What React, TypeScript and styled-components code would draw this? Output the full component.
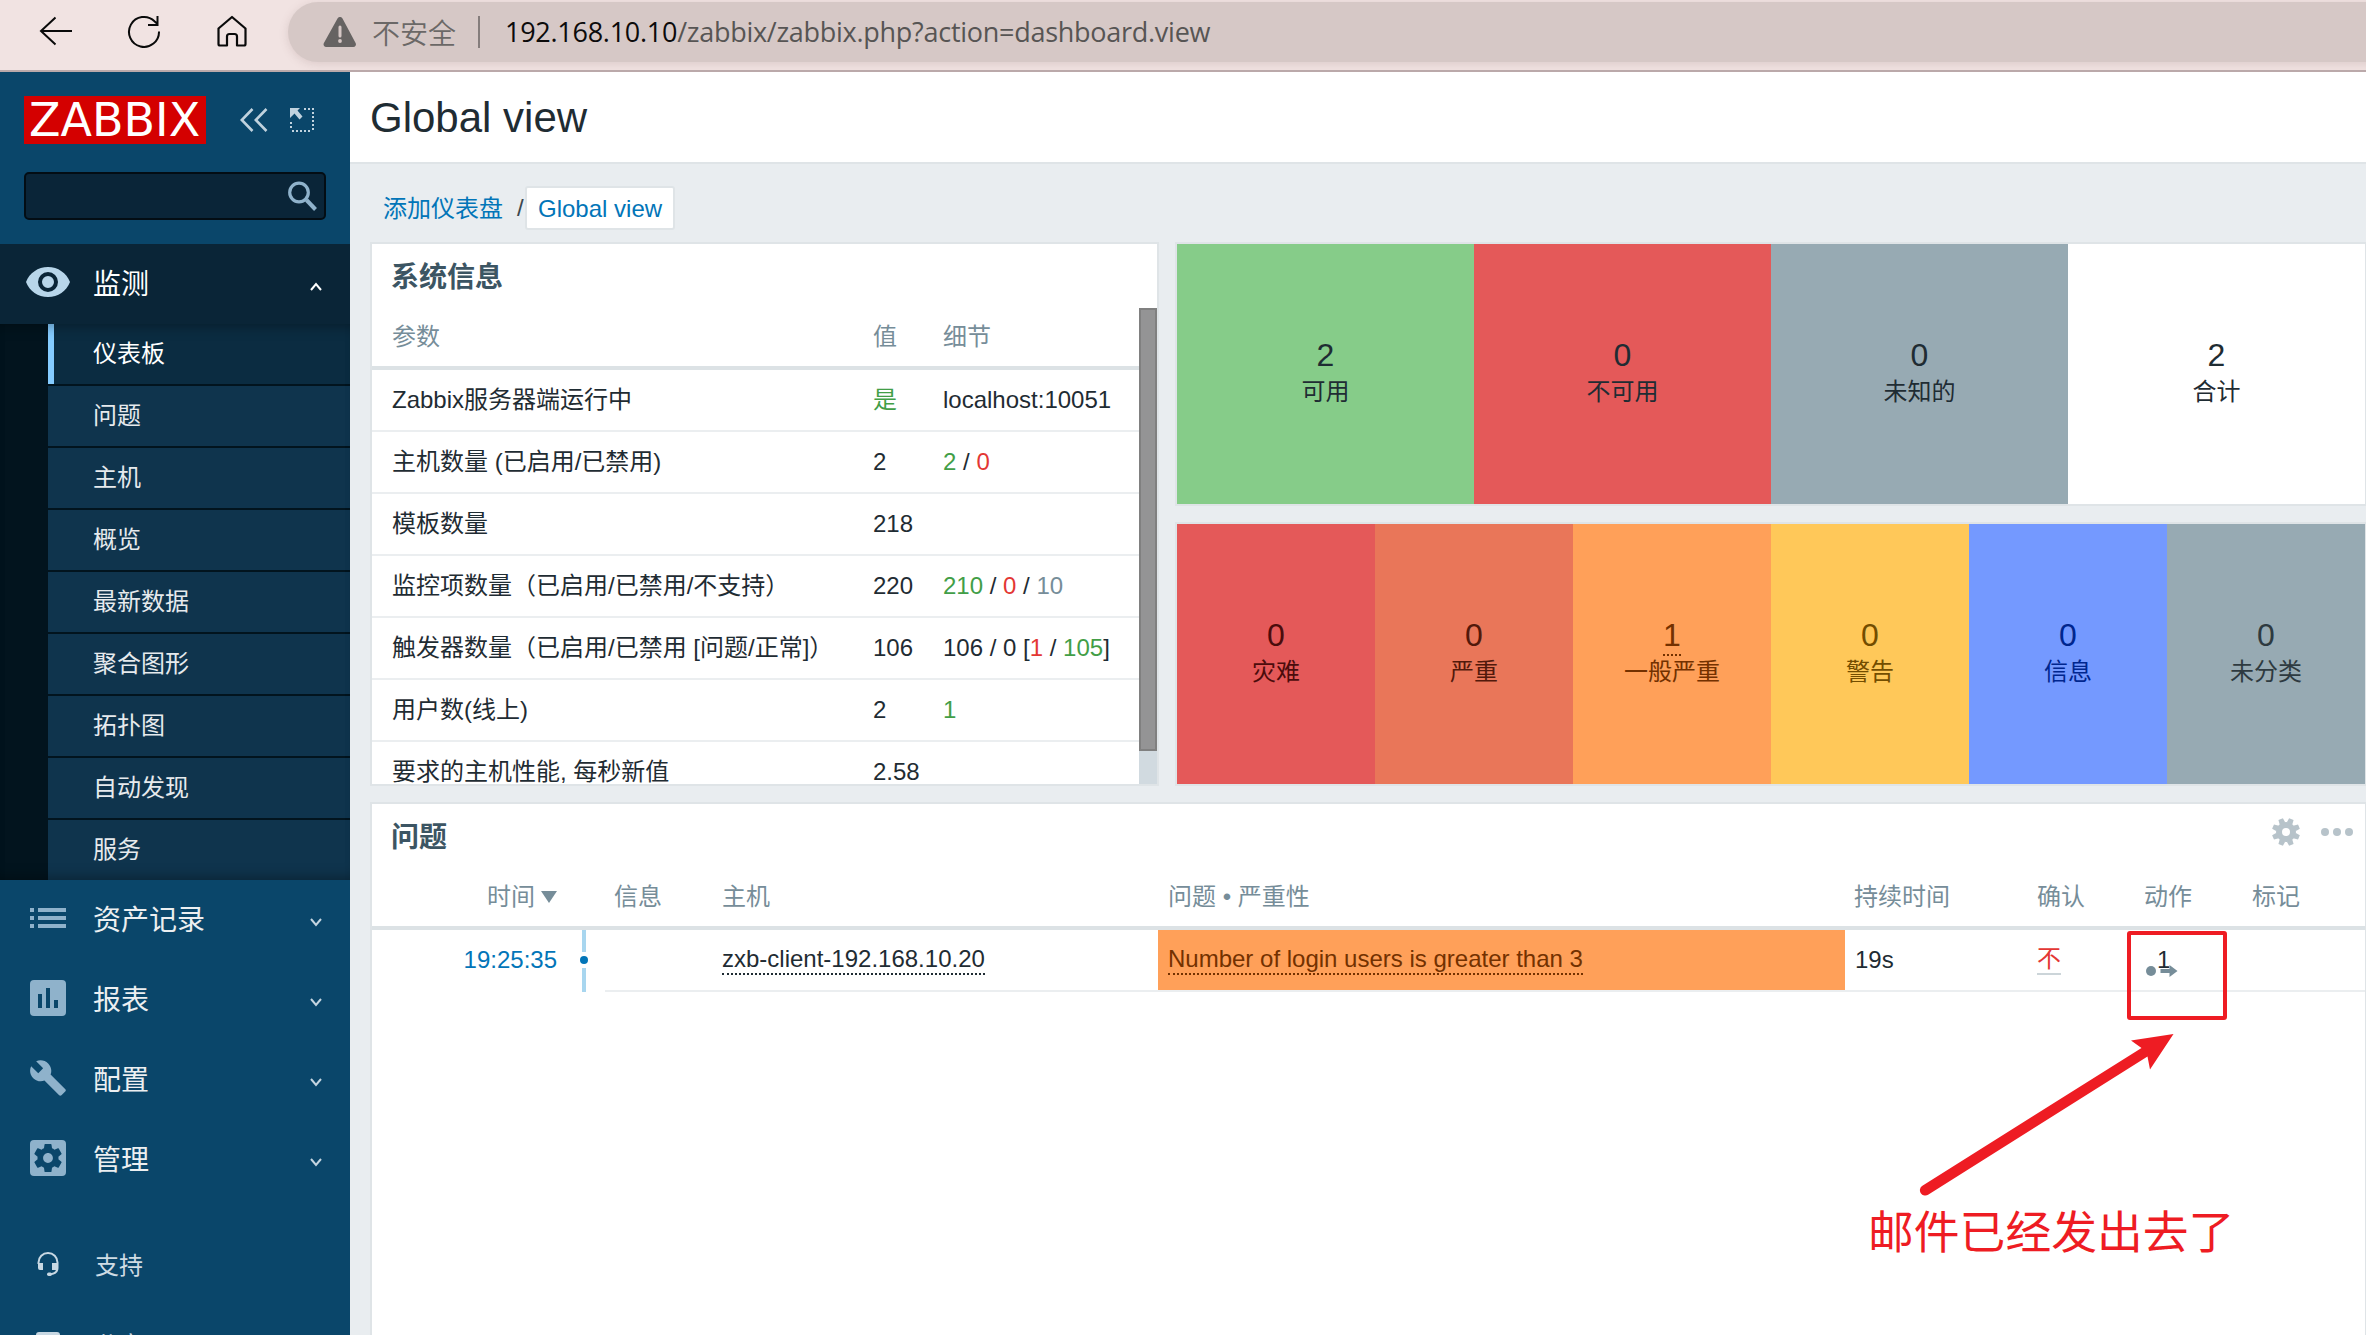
import React from "react";
import styled, { createGlobalStyle } from "styled-components";

const Global = createGlobalStyle`
  * { box-sizing: border-box; }
  html, body { margin: 0; padding: 0; overflow: hidden; }
  body {
    font-family: "Liberation Sans", "Noto Sans CJK SC", sans-serif;
    font-size: 24px;
    line-height: 28px;
    color: #1f2c33;
  }
  svg { display: block; flex: none; }
`;

const Page = styled.div`
  position: relative;
  width: 2366px;
  height: 1335px;
  overflow: hidden;
  display: flex;
  flex-direction: column;
  background: #e9edf0;
`;

/* ---------- browser bar ---------- */
const BrowserBar = styled.div`
  flex: none;
  height: 72px;
  display: flex;
  align-items: flex-start;
  background: #f1e3e2;
  border-bottom: 2px solid #bba9aa;
  overflow: hidden;
`;
const NavButtons = styled.div`
  width: 288px;
  height: 62px;
  padding-left: 38px;
  display: flex;
  align-items: center;
  gap: 52px;
`;
const Address = styled.div`
  flex: 1;
  height: 60px;
  margin: 2px -40px 0 0;
  padding-left: 35px;
  border-radius: 30px;
  background: #d6c8c6;
  box-shadow: 0 2px 10px rgba(120, 90, 90, 0.18);
  display: flex;
  align-items: center;
  color: #575554;
`;
const Insecure = styled.span`
  margin-left: 15px;
  font: 28px/40px "Noto Sans CJK SC", sans-serif;
  font-weight: 350;
  color: #6b6867;
`;
const Divider = styled.span`
  width: 2px;
  height: 32px;
  margin: 0 25px 0 22px;
  background: #857d7c;
`;
const Url = styled.span`
  font: 27px/40px "Open Sans", "Noto Sans", sans-serif;
  letter-spacing: -0.27px;
  white-space: nowrap;
  b { font-weight: 400; color: #0c0b0b; }
`;

/* ---------- sidebar ---------- */
const Body = styled.div`
  flex: 1;
  min-height: 0;
  display: flex;
`;
const Sidebar = styled.aside`
  flex: none;
  width: 350px;
  overflow: hidden;
  background: #0a466a;
  color: #e9edf0;
`;
const Brand = styled.div`
  height: 72px;
  margin-bottom: 28px;
  padding: 24px 0 0 24px;
  display: flex;
  align-items: center;
`;
const Logo = styled.div`
  width: 182px;
  height: 48px;
  padding-left: 5px;
  background: #d40000;
  color: #fff;
  font: 46px/48px "DejaVu Sans", sans-serif;
  white-space: nowrap;
`;
const BrandIcons = styled.div`
  margin-left: 34px;
  display: flex;
  align-items: center;
  gap: 22px;
`;
const Search = styled.div`
  width: 302px;
  height: 48px;
  margin: 0 0 24px 24px;
  padding-right: 7px;
  display: flex;
  align-items: center;
  justify-content: flex-end;
  border: 2px solid #030d14;
  border-radius: 5px;
  background: #0a2538;
`;
const MenuItem = styled.div<{ $open?: boolean }>`
  height: 80px;
  padding: 0 28px 0 24px;
  display: flex;
  align-items: center;
  font-size: 28px;
  line-height: 34px;
  background: ${(p) => (p.$open ? "#0a2537" : "transparent")};
  color: ${(p) => (p.$open ? "#fff" : "#eceff1")};
`;
const MenuIcon = styled.span`
  width: 48px;
  margin-right: 21px;
  padding-bottom: 4px;
  display: flex;
  justify-content: center;
`;
const MenuLabel = styled.span`
  flex: 1;
  padding-top: 1px;
`;
const Submenu = styled.div`
  position: relative;
  height: 556px;
  padding-left: 48px;
  background: #02141e;
  &::after {
    content: "";
    position: absolute;
    inset: 0;
    box-shadow: inset 0 12px 14px -10px rgba(0, 0, 0, 0.35), inset 0 -12px 14px -10px rgba(0, 0, 0, 0.35);
  }
`;
const SubItem = styled.div<{ $active?: boolean }>`
  height: 60px;
  margin-bottom: 2px;
  padding-left: ${(p) => (p.$active ? 39 : 45)}px;
  border-left: ${(p) => (p.$active ? "6px solid #85ccff" : "0")};
  line-height: 60px;
  background: ${(p) => (p.$active ? "#0b2c41" : "#0f344d")};
  color: ${(p) => (p.$active ? "#fff" : "#e6eaed")};
`;
const UserNav = styled.div`
  padding-top: 25px;
`;
const UserItem = styled(MenuItem)`
  font-size: 24px;
  color: #cfdce4;
  ${MenuIcon} { margin-right: 23px; padding-bottom: 2px; }
`;

/* ---------- main ---------- */
const Main = styled.main`
  flex: 1;
  min-width: 0;
  display: flex;
  flex-direction: column;
`;
const Header = styled.header`
  flex: none;
  height: 92px;
  padding: 22px 0 0 20px;
  background: #fff;
  border-bottom: 2px solid #dfe4e7;
  font-size: 42px;
  line-height: 48px;
`;
const Crumbs = styled.nav`
  flex: none;
  height: 78px;
  padding: 22px 0 0 33px;
  display: flex;
  line-height: 44px;
  color: #0275b8;
`;
const CrumbLink = styled.span`
  line-height: 46px;
`;
const Slash = styled.span`
  width: 22px;
  padding-left: 14px;
  color: #3a474e;
`;
const Crumb = styled.span`
  height: 44px;
  padding: 0 11px;
  line-height: 42px;
  border: 2px solid #dfe4e7;
  border-radius: 3px;
  background: #fff;
`;
const Dashboard = styled.div`
  flex: 1;
  width: 1997px;
  margin-left: 20px;
  display: grid;
  grid-template-columns: 789px 1192px;
  grid-template-rows: 264px 264px 560px;
  gap: 16px;
`;
const Widget = styled.section<{ $area: string }>`
  grid-area: ${(p) => p.$area};
  border: 2px solid #dfe4e7;
  background: #fff;
  overflow: hidden;
`;
const WidgetHead = styled.div`
  height: 64px;
  padding: 4px 12px 0 19px;
  display: flex;
  align-items: center;
  font-size: 28px;
  font-weight: 700;
  color: #3c5563;
`;
const WidgetActions = styled.div`
  height: 56px;
  margin: 0 0 12px auto;
  display: flex;
  align-items: center;
  gap: 21px;
`;

/* ---------- system information ---------- */
const Scroller = styled.div`
  height: 476px;
  display: flex;
`;
const InfoTable = styled.div`
  flex: 1;
`;
const InfoRow = styled.div<{ $head?: boolean }>`
  height: 62px;
  padding-left: 20px;
  display: grid;
  grid-template-columns: 481px 70px 1fr;
  line-height: ${(p) => (p.$head ? 58 : 60)}px;
  border-bottom: ${(p) => (p.$head ? "4px solid #dce2e5" : "2px solid #ebeef0")};
  color: ${(p) => (p.$head ? "#768d99" : "inherit")};
  white-space: nowrap;
`;
const Tint = styled.span<{ $c: string }>`
  color: ${(p) => p.$c};
`;
const Track = styled.div`
  width: 18px;
  background: #d1dae0;
`;
const Thumb = styled.div`
  height: 443px;
  background: #949495;
  border: 2px solid #808080;
`;

/* ---------- tiles ---------- */
const Tiles = styled.div`
  width: 1188px;
  height: 260px;
  display: flex;
`;
const Tile = styled.div<{ $bg: string; $fg: string }>`
  flex: 1;
  display: flex;
  flex-direction: column;
  align-items: center;
  justify-content: center;
  padding-bottom: 6px;
  background: ${(p) => p.$bg};
  color: ${(p) => p.$fg};
`;
const Count = styled.span<{ $dotted?: boolean }>`
  font-size: 32px;
  line-height: 38px;
  margin-bottom: 2px;
  height: 40px;
  border-bottom: ${(p) => (p.$dotted ? "2px dotted currentColor" : "0")};
`;

/* ---------- problems ---------- */
const ProblemRow = styled.div<{ $head?: boolean }>`
  height: 62px;
  display: grid;
  grid-template-columns: 185px 48px 108px 445px 687px 183px 108px 107px 1fr;
  line-height: ${(p) => (p.$head ? 58 : 60)}px;
  color: ${(p) => (p.$head ? "#768d99" : "inherit")};
  border-bottom: ${(p) => (p.$head ? "4px solid #dce2e5" : "0")};
  white-space: nowrap;
`;
const Cell = styled.div<{ $bg?: string; $line?: boolean; $inset?: number }>`
  padding-left: ${(p) => p.$inset ?? 9}px;
  display: flex;
  align-items: center;
  background: ${(p) => p.$bg || "none"};
  background-clip: padding-box;
  border-bottom: ${(p) => (p.$line ? "2px solid #ebeef0" : "0")};
`;
const TimeCell = styled.div<{ $link?: boolean }>`
  display: flex;
  align-items: center;
  justify-content: flex-end;
  gap: 6px;
  height: ${(p) => (p.$link ? "60px" : "auto")};
  color: ${(p) => (p.$link ? "#0275b8" : "inherit")};
`;
const Timeline = styled.div`
  display: flex;
  flex-direction: column;
  align-items: center;
  padding-left: 6px;
  gap: 4px;
`;
const TimelineBar = styled.i<{ $h: number }>`
  width: 4px;
  height: ${(p) => p.$h}px;
  background: #a8d6ef;
`;
const TimelineDot = styled.i`
  width: 8px;
  height: 8px;
  border-radius: 50%;
  background: #0275b8;
`;
const Dotted = styled.span<{ $c?: string; $solid?: boolean }>`
  height: 30px;
  line-height: 28px;
  color: ${(p) => p.$c || "inherit"};
  border-bottom: 2px ${(p) => (p.$solid ? "solid #ccd5d9" : "dotted currentColor")};
`;
const ActionIcon = styled.div`
  position: relative;
  width: 40px;
  height: 30px;
  line-height: 30px;
  padding-left: 12px;
  svg { position: absolute; left: 1px; top: 20px; }
`;

/* ---------- annotation ---------- */
const Annotation = styled.div`
  position: absolute;
  left: 1860px;
  top: 924px;
  width: 400px;
  height: 360px;
  color: #ee1c23;
`;
const Note = styled.div`
  position: absolute;
  left: 8px;
  top: 280px;
  font-size: 45.8px;
  line-height: 60px;
  white-space: nowrap;
`;

const ICON = "#8fb2cb";

const Caret = ({ up }: { up?: boolean }) => (
  <svg width="12" height="13" viewBox="0 -4 12 13">
    <path d={up ? "M1 8 L6 2 L11 8" : "M1 1 L6 7 L11 1"} fill="none" stroke={up ? "#fff" : "#c5d5e0"} strokeWidth="2" />
  </svg>
);

const EyeIcon = () => (
  <svg width="44" height="30" viewBox="0 0 44 30">
    <path fillRule="evenodd" fill="#b8d6ea" d="M22 0C12 0 3.500 6 0 15c3.500 9 12 15 22 15s18.500-6 22-15C40.500 6 32 0 22 0zm0 25a10 10 0 1 1 0-20 10 10 0 0 1 0 20zm0-16a6 6 0 1 0 0 12 6 6 0 0 0 0-12z" />
  </svg>
);
const ListIcon = () => (
  <svg width="36" height="20" viewBox="0 0 36 20" fill={ICON}>
    <path d="M0 0h4v4H0zM8 0h28v4H8zM0 8h4v4H0zM8 8h28v4H8zM0 16h4v4H0zM8 16h28v4H8z" />
  </svg>
);
const ReportIcon = () => (
  <svg width="36" height="36" viewBox="0 0 36 36">
    <rect width="36" height="36" rx="4" fill={ICON} />
    <path fill="#0a466a" d="M8 14h4v14H8zM16 8h4v20h-4zM24 20h4v8h-4z" />
  </svg>
);
const WrenchIcon = () => (
  <svg width="36" height="36" viewBox="0.900 0.900 22.200 22.200">
    <path fill={ICON} d="M22.700 19l-9.100-9.100c.9-2.300.4-5-1.500-6.900-2-2-5-2.400-7.400-1.300L9 6 6 9 1.600 4.700C.4 7.100.9 10.100 2.900 12.100c1.900 1.900 4.600 2.400 6.900 1.500l9.100 9.100c.4.4 1 .4 1.400 0l2.300-2.300c.5-.4.5-1.100.1-1.400z" />
  </svg>
);
const AdminIcon = () => (
  <svg width="36" height="36" viewBox="3 3 18 18">
    <rect x="3" y="3" width="18" height="18" rx="2" fill={ICON} />
    <g transform="translate(12 12) scale(0.700) translate(-12 -12)">
      <path fill="#0a466a" d="M19.430 12.980c.04-.32.070-.64.070-.98s-.03-.66-.07-.98l2.110-1.650c.19-.15.240-.42.120-.64l-2-3.460c-.12-.22-.39-.3-.61-.22l-2.490 1c-.52-.4-1.080-.73-1.690-.98l-.38-2.650C14.460 2.180 14.250 2 14 2h-4c-.25 0-.46.18-.49.42l-.38 2.650c-.61.250-1.170.59-1.690.98l-2.490-1c-.23-.09-.49 0-.61.220l-2 3.460c-.13.220-.07.490.12.640l2.110 1.650c-.04.320-.07.650-.07.980s.03.660.070.980l-2.110 1.650c-.19.150-.24.420-.12.640l2 3.460c.12.220.39.300.61.220l2.490-1c.52.400 1.080.730 1.690.980l.38 2.650c.03.240.240.420.490.420h4c.25 0 .46-.18.490-.42l.38-2.650c.61-.25 1.170-.59 1.690-.98l2.490 1c.23.090.49 0 .61-.22l2-3.460c.12-.22.070-.49-.12-.64l-2.110-1.650zM12 15.500c-1.930 0-3.500-1.570-3.500-3.500s1.570-3.500 3.500-3.500 3.500 1.570 3.500 3.500-1.570 3.500-3.500 3.500z" />
    </g>
  </svg>
);
const SupportIcon = () => (
  <svg width="22" height="24" viewBox="0 0 22 24" fill="none" stroke="#c8d8e3">
    <path d="M1.500 12V10.500a9.500 9.500 0 0 1 19 0V16c0 4-3 6-8 6.300" strokeWidth="2" />
    <path d="M1 11h5v7H3a2 2 0 0 1-2-2zM15 11h5v7h-5z" fill="#c8d8e3" stroke="none" />
    <rect x="10" y="20.500" width="5" height="3.500" rx="1.700" fill="#c8d8e3" stroke="none" />
  </svg>
);
const ShareIcon = () => (
  <svg width="24" height="24" viewBox="0 0 24 24">
    <rect width="24" height="24" rx="3" fill="#c8d8e3" />
    <path d="M7 6h10L7 18h10" fill="none" stroke="#0a466a" strokeWidth="2.500" />
  </svg>
);

const TOP = [
  ["2", "可用", "#86cc89"],
  ["0", "不可用", "#e45959"],
  ["0", "未知的", "#97aab3"],
  ["2", "合计", "#ffffff"],
];
const SEV = [
  ["0", "灾难", "#e45959", "#4b0c0c"],
  ["0", "严重", "#e97659", "#52190b"],
  ["1", "一般严重", "#ffa059", "#733100"],
  ["0", "警告", "#ffc859", "#734d00"],
  ["0", "信息", "#7499ff", "#00268e"],
  ["0", "未分类", "#97aab3", "#2e3a40"],
];
const G = "#429e47";
const R = "#e33734";
const INFO: [string, React.ReactNode, React.ReactNode][] = [
  ["Zabbix服务器端运行中", <Tint $c={G}>是</Tint>, "localhost:10051"],
  ["主机数量 (已启用/已禁用)", "2", <><Tint $c={G}>2</Tint> / <Tint $c={R}>0</Tint></>],
  ["模板数量", "218", ""],
  ["监控项数量（已启用/已禁用/不支持）", "220", <><Tint $c={G}>210</Tint> / <Tint $c={R}>0</Tint> / <Tint $c="#768d99">10</Tint></>],
  ["触发器数量（已启用/已禁用 [问题/正常]）", "106", <>106 / 0 [<Tint $c={R}>1</Tint> / <Tint $c={G}>105</Tint>]</>],
  ["用户数(线上)", "2", <Tint $c={G}>1</Tint>],
  ["要求的主机性能, 每秒新值", "2.58", ""],
];
const SUB = ["仪表板", "问题", "主机", "概览", "最新数据", "聚合图形", "拓扑图", "自动发现", "服务"];
const MENU: [string, React.ReactNode][] = [
  ["资产记录", <ListIcon />],
  ["报表", <ReportIcon />],
  ["配置", <WrenchIcon />],
  ["管理", <AdminIcon />],
];

const gearTeeth = Array.from({ length: 8 }, (_, i) => i * 45 + 22.5);

export default function App() {
  return (
    <Page>
      <Global />
      <BrowserBar>
        <NavButtons>
          <svg width="36" height="36" viewBox="0 0 36 36" fill="none" stroke="#0a0a0a" strokeWidth="2">
            <path d="M34 18H3M17.500 4.500L3 18l14.500 13.500" />
          </svg>
          <svg width="36" height="36" viewBox="0 0 36 36" fill="none" stroke="#0a0a0a" strokeWidth="2">
            <path d="M33 18.500A15 15 0 1 1 28.500 8.200L31.500 11M31.500 3v9h-9.500" />
          </svg>
          <svg width="36" height="36" viewBox="0 0 36 36" fill="none" stroke="#0a0a0a" strokeWidth="2.200" strokeLinejoin="round">
            <path d="M4.500 15.500L18 4l13.500 11.500v15.500a1.500 1.500 0 0 1-1.500 1.500h-7v-9a2.500 2.500 0 0 0-2.500-2.500h-5A2.500 2.500 0 0 0 13 23.500v9H6a1.500 1.500 0 0 1-1.500-1.500z" />
          </svg>
        </NavButtons>
        <Address>
          <svg width="34" height="30" viewBox="0 0 34 30">
            <path d="M14.500 1.500a2.800 2.800 0 0 1 5 0L32.600 26a2.700 2.700 0 0 1-2.400 4H3.300a2.700 2.700 0 0 1-2.400-4z" fill="#666362" />
            <path d="M17 10v9" stroke="#d6c8c6" strokeWidth="3" strokeLinecap="round" />
            <circle cx="17" cy="24" r="1.900" fill="#d6c8c6" />
          </svg>
          <Insecure>不安全</Insecure>
          <Divider />
          <Url><b>192.168.10.10</b>/zabbix/zabbix.php?action=dashboard.view</Url>
        </Address>
      </BrowserBar>
      <Body>
        <Sidebar>
          <Brand>
            <Logo>ZABBIX</Logo>
            <BrandIcons>
              <svg width="28" height="24" viewBox="0 0 28 24" fill="none" stroke="#c0d2de" strokeWidth="2.600">
                <path d="M12.500 1L1.800 12l10.700 11M26.500 1L15.800 12l10.700 11" />
              </svg>
              <svg width="24" height="24" viewBox="0 0 24 24">
                <path d="M14 1h10M23 4v20M20 23H0M1 20V12" fill="none" stroke="#c0d2de" strokeWidth="2" strokeDasharray="2 2" />
                <path d="M0 0h10L7.500 2.500l5 6-3 3-5-6L0 10z" fill="#c0d2de" />
              </svg>
            </BrandIcons>
          </Brand>
          <Search>
            <svg width="29" height="30" viewBox="0 0 29 30" fill="none" stroke={ICON}>
              <circle cx="11" cy="11.500" r="9.300" strokeWidth="3.200" />
              <path d="M18.500 19L27.500 28.500" strokeWidth="4" />
            </svg>
          </Search>
          <MenuItem $open>
            <MenuIcon><EyeIcon /></MenuIcon>
            <MenuLabel>监测</MenuLabel>
            <Caret up />
          </MenuItem>
          <Submenu>
            {SUB.map((s, i) => <SubItem key={s} $active={i === 0}>{s}</SubItem>)}
          </Submenu>
          {MENU.map(([label, icon]) => (
            <MenuItem key={label}>
              <MenuIcon>{icon}</MenuIcon>
              <MenuLabel>{label}</MenuLabel>
              <Caret />
            </MenuItem>
          ))}
          <UserNav>
            <UserItem><MenuIcon><SupportIcon /></MenuIcon><MenuLabel>支持</MenuLabel></UserItem>
            <UserItem><MenuIcon><ShareIcon /></MenuIcon><MenuLabel>分享</MenuLabel></UserItem>
          </UserNav>
        </Sidebar>
        <Main>
          <Header>Global view</Header>
          <Crumbs>
            <CrumbLink>添加仪表盘</CrumbLink>
            <Slash>/</Slash>
            <Crumb>Global view</Crumb>
          </Crumbs>
          <Dashboard>
            <Widget $area="1 / 1 / 3 / 2">
              <WidgetHead>系统信息</WidgetHead>
              <Scroller>
                <InfoTable>
                  <InfoRow $head><span>参数</span><span>值</span><span>细节</span></InfoRow>
                  {INFO.map(([a, b, c]) => (
                    <InfoRow key={a}><span>{a}</span><span>{b}</span><span>{c}</span></InfoRow>
                  ))}
                </InfoTable>
                <Track><Thumb /></Track>
              </Scroller>
            </Widget>
            <Widget $area="1 / 2 / 2 / 3">
              <Tiles>
                {TOP.map(([n, l, bg]) => (
                  <Tile key={l} $bg={bg} $fg="#1f2c33"><Count>{n}</Count><span>{l}</span></Tile>
                ))}
              </Tiles>
            </Widget>
            <Widget $area="2 / 2 / 3 / 3">
              <Tiles>
                {SEV.map(([n, l, bg, fg]) => (
                  <Tile key={l} $bg={bg} $fg={fg}><Count $dotted={n === "1"}>{n}</Count><span>{l}</span></Tile>
                ))}
              </Tiles>
            </Widget>
            <Widget $area="3 / 1 / 4 / 3">
              <WidgetHead>
                问题
                <WidgetActions>
                  <svg width="28" height="28" viewBox="-14 -14 28 28">
                    <circle r="7" fill="none" stroke="#b7c3ca" strokeWidth="6" />
                    {gearTeeth.map((a) => (
                      <path key={a} d="M-3 -9L-2.400 -14H2.400L3 -9z" fill="#b7c3ca" transform={`rotate(${a})`} />
                    ))}
                  </svg>
                  <svg width="32" height="8" viewBox="0 0 32 8" fill="#b7c3ca">
                    <circle cx="4" cy="4" r="4" /><circle cx="16" cy="4" r="4" /><circle cx="28" cy="4" r="4" />
                  </svg>
                </WidgetActions>
              </WidgetHead>
              <ProblemRow $head>
                <TimeCell>时间<svg width="16" height="12" viewBox="0 0 16 12"><path d="M0 0h16L8 12z" fill="#768d99" /></svg></TimeCell>
                <span />
                <Cell>信息</Cell>
                <Cell>主机</Cell>
                <Cell $inset={10}>问题 • 严重性</Cell>
                <Cell>持续时间</Cell>
                <Cell>确认</Cell>
                <Cell $inset={8}>动作</Cell>
                <Cell>标记</Cell>
              </ProblemRow>
              <ProblemRow>
                <TimeCell $link>19:25:35</TimeCell>
                <Timeline><TimelineBar $h={22} /><TimelineDot /><TimelineBar $h={24} /></Timeline>
                <Cell $line />
                <Cell $line><Dotted>zxb-client-192.168.10.20</Dotted></Cell>
                <Cell $line $bg="#ffa059" $inset={10}><Dotted $c="#733100">Number of login users is greater than 3</Dotted></Cell>
                <Cell $line $inset={10}>19s</Cell>
                <Cell $line><Dotted $c={R} $solid>不</Dotted></Cell>
                <Cell $line>
                  <ActionIcon>
                    1
                    <svg width="32" height="12" viewBox="0 0 32 12" fill="#768d99">
                      <circle cx="5" cy="6" r="5" />
                      <path d="M14.500 4h9V0l8 6-8 6V8h-9z" />
                    </svg>
                  </ActionIcon>
                </Cell>
                <Cell $line />
              </ProblemRow>
            </Widget>
          </Dashboard>
        </Main>
      </Body>
      <Annotation>
        <svg width="400" height="280" viewBox="1860 924 400 280">
          <rect x="2129" y="933" width="96" height="85" rx="1" fill="none" stroke="#ee1c23" strokeWidth="4" />
          <path d="M2173.500 1034L2131 1040.500L2141.500 1048L1922 1186A5.200 5.200 0 0 0 1928.500 1194.500L2147.500 1056.500L2150 1069.500Z" fill="#ee1c23" />
        </svg>
        <Note>邮件已经发出去了</Note>
      </Annotation>
    </Page>
  );
}
